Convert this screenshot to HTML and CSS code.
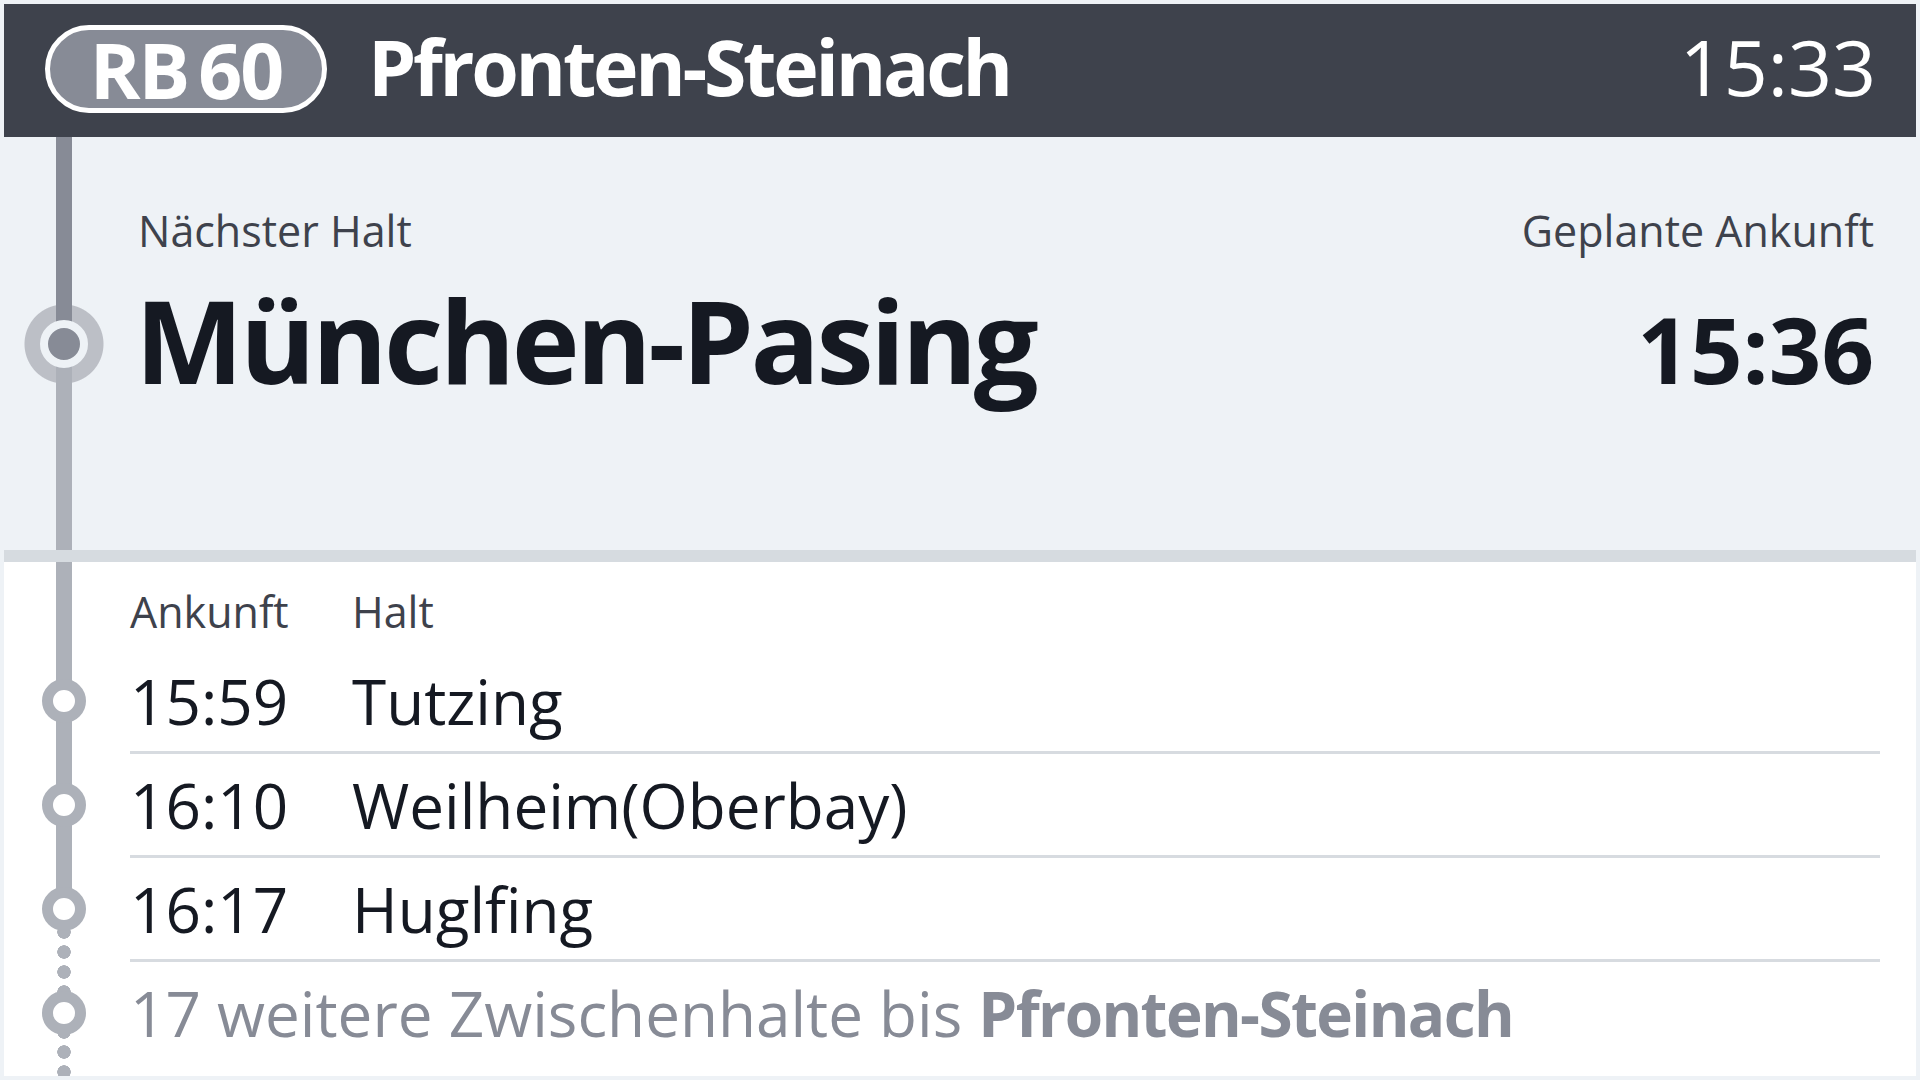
FILE: index.html
```html
<!DOCTYPE html>
<html lang="de">
<head>
  <meta charset="UTF-8">
  <meta name="viewport" content="width=device-width, initial-scale=1.0">
  <title>RB 60 - Fahrgastinformation</title>
  <link rel="stylesheet" href="styles.css">
</head>
<body>
  <div class="screen">
    <header class="topbar">
      <div class="line-badge">RB<span class="badge-gap"></span>60</div>
      <div class="destination">Pfronten-Steinach</div>
      <div class="clock">15:33</div>
    </header>

    <!-- next stop -->
    <section class="next">
      <div class="rail rail-next"><span class="stop-now"></span></div>
      <div class="next-body">
        <div class="next-labels">
          <span>Nächster Halt</span>
          <span>Geplante Ankunft</span>
        </div>
        <div class="next-values">
          <span class="next-name">München-Pasing</span>
          <span class="next-time">15:36</span>
        </div>
      </div>
    </section>

    <div class="divider"></div>

    <!-- following stops -->
    <section class="stops">
      <div class="stop-row stops-head">
        <div class="rail rail-solid"></div>
        <div class="stop-cells">
          <span class="col-time">Ankunft</span>
          <span>Halt</span>
        </div>
      </div>
      <div class="stop-row">
        <div class="rail rail-solid"><span class="ring"></span></div>
        <div class="stop-cells line">
          <span class="col-time">15:59</span>
          <span>Tutzing</span>
        </div>
      </div>
      <div class="stop-row">
        <div class="rail rail-solid"><span class="ring"></span></div>
        <div class="stop-cells line">
          <span class="col-time">16:10</span>
          <span>Weilheim(Oberbay)</span>
        </div>
      </div>
      <div class="stop-row">
        <div class="rail rail-fade"><span class="ring"></span></div>
        <div class="stop-cells line">
          <span class="col-time">16:17</span>
          <span>Huglfing</span>
        </div>
      </div>
      <div class="stop-row stop-more">
        <div class="rail rail-dots"><span class="ring"></span></div>
        <div class="stop-cells">
          <span class="more-text">17 weitere Zwischenhalte bis <b>Pfronten-Steinach</b></span>
        </div>
      </div>
    </section>
  </div>
</body>
</html>
```

FILE: styles.css
```css
html, body {
  margin: 0;
  height: 100%;
}

body {
  font-family: 'Open Sans', 'Noto Sans', sans-serif;
  background-color: #eef2f6;
  color: #151922;
  padding: 4px;
  box-sizing: border-box;
}

.screen {
  height: 100%;
  display: flex;
  flex-direction: column;
}

/* Top bar */
.topbar {
  height: 133px;
  flex-shrink: 0;
  box-sizing: border-box;
  background-color: #3e424c;
  color: #fff;
  display: flex;
  align-items: center;
  padding: 0 40px 8px 41px;
}

.line-badge {
  width: 282px;
  height: 88px;
  margin-top: 5px;
  box-sizing: border-box;
  border: 5px solid #fff;
  border-radius: 44px;
  background-color: #878b96;
  display: flex;
  align-items: center;
  justify-content: center;
  font-size: 77px;
  font-weight: 700;
  line-height: 1;
  letter-spacing: -2px;
}

.badge-gap {
  display: inline-block;
  width: 10px;
}

.destination {
  margin-left: 41px;
  font-size: 77px;
  font-weight: 700;
  line-height: 1;
  letter-spacing: -3.3px;
}

.clock {
  margin-left: auto;
  font-size: 77px;
  line-height: 1;
}

/* Next stop */
.next {
  height: 413px;
  flex-shrink: 0;
  display: flex;
}

.rail {
  width: 120px;
  flex-shrink: 0;
  display: flex;
  justify-content: center;
}

.rail-next {
  align-items: center;
  background:
    linear-gradient(#878b96, #878b96) center top / 16px 50% no-repeat,
    linear-gradient(#adb1b9, #adb1b9) center bottom / 16px 50% no-repeat,
    radial-gradient(circle, #bcbfc6 39px, transparent 40px) center / 80px 80px no-repeat;
}

.stop-now {
  width: 32px;
  height: 32px;
  border: 8px solid #eef2f6;
  border-radius: 50%;
  background-color: #878b96;
}

.next-body {
  flex: 1;
  padding: 72px 42px 0 14px;
}

.next-labels {
  display: flex;
  justify-content: space-between;
  font-size: 43px;
  line-height: 43px;
  color: #3e424c;
}

.next-values {
  margin-top: 30px;
  display: flex;
  justify-content: space-between;
  align-items: baseline;
  font-weight: 700;
  line-height: 115px;
}

.next-name {
  font-size: 115px;
  letter-spacing: -3.5px;
  margin-left: -3px;
}

.next-time {
  font-size: 92px;
}

.divider {
  height: 12px;
  flex-shrink: 0;
  background-color: #d6dbe0;
}

/* Stop list */
.stops {
  flex: 1;
  display: flex;
  flex-direction: column;
  background-color: #fff;
}

.stop-row {
  display: flex;
  height: 104px;
  flex-shrink: 0;
}

.stop-cells {
  flex: 1;
  margin: 0 36px 0 6px;
  display: grid;
  grid-template-columns: 222px 1fr;
  align-items: center;
  font-size: 62px;
  line-height: 1;
}

.stop-cells.line {
  border-bottom: 3px solid #d7dbe0;
}

.stops-head {
  height: 88px;
}

.stops-head .stop-cells {
  align-items: start;
  padding-top: 28px;
  font-size: 43px;
  line-height: 43px;
  color: #3e424c;
}

.stop-more {
  flex: 1;
}

.stop-more .stop-cells {
  display: block;
  padding-top: 20px;
  color: #878b96;
}

.more-text b {
  font-weight: 700;
  letter-spacing: -1.6px;
}

.rail-solid {
  background: linear-gradient(#adb1b9, #adb1b9) center / 16px 100% no-repeat;
}

.rail-fade {
  background:
    linear-gradient(#adb1b9, #adb1b9) center top / 16px 51px no-repeat,
    radial-gradient(circle, #adb1b9 6.5px, transparent 7px) center 4px / 16px 20px repeat-y;
}

.rail-dots {
  background: radial-gradient(circle, #adb1b9 6.5px, transparent 7px) center 0 / 16px 20px repeat-y;
}

.ring {
  width: 22px;
  height: 22px;
  margin-top: 29px;
  border: 11px solid #adb1b9;
  border-radius: 50%;
  background-color: #fff;
}
```
